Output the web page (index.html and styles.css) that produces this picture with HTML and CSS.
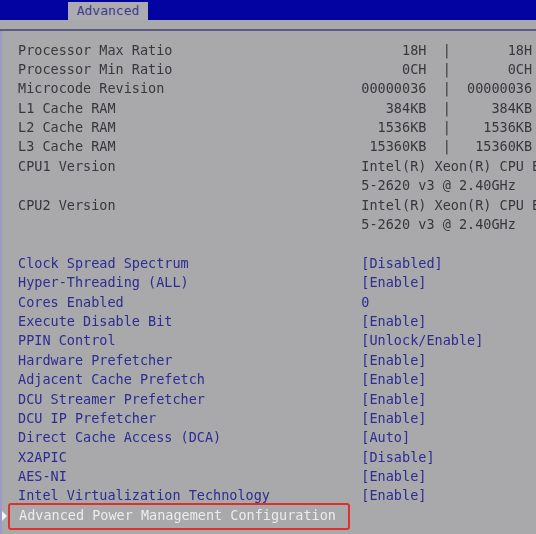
FILE: index.html
```html
<!DOCTYPE html>
<html>
<head>
  <title>Setup Utility - Advanced</title>
  <link rel="stylesheet" href="styles.css">
</head>
<body>
  <div class="topbar">
    <div class="tab">Advanced</div>
  </div>
  <div class="rule"></div>

  <div class="screen">
    <div class="row info"><span class="label">Processor Max Ratio</span><span class="value">     18H  |       18H</span></div>
    <div class="row info"><span class="label">Processor Min Ratio</span><span class="value">     0CH  |       0CH</span></div>
    <div class="row info"><span class="label">Microcode Revision</span><span class="value">00000036  |  00000036</span></div>
    <div class="row info"><span class="label">L1 Cache RAM</span><span class="value">   384KB  |     384KB</span></div>
    <div class="row info"><span class="label">L2 Cache RAM</span><span class="value">  1536KB  |    1536KB</span></div>
    <div class="row info"><span class="label">L3 Cache RAM</span><span class="value"> 15360KB  |   15360KB</span></div>
    <div class="row info"><span class="label">CPU1 Version</span><span class="value">Intel(R) Xeon(R) CPU E</span></div>
    <div class="row info"><span class="label"></span><span class="value">5-2620 v3 @ 2.40GHz</span></div>
    <div class="row info"><span class="label">CPU2 Version</span><span class="value">Intel(R) Xeon(R) CPU E</span></div>
    <div class="row info"><span class="label"></span><span class="value">5-2620 v3 @ 2.40GHz</span></div>
    <div class="row"></div>

    <div class="row opt"><span class="label">Clock Spread Spectrum</span><span class="value">[Disabled]</span></div>
    <div class="row opt"><span class="label">Hyper-Threading (ALL)</span><span class="value">[Enable]</span></div>
    <div class="row opt"><span class="label">Cores Enabled</span><span class="value">0</span></div>
    <div class="row opt"><span class="label">Execute Disable Bit</span><span class="value">[Enable]</span></div>
    <div class="row opt"><span class="label">PPIN Control</span><span class="value">[Unlock/Enable]</span></div>
    <div class="row opt"><span class="label">Hardware Prefetcher</span><span class="value">[Enable]</span></div>
    <div class="row opt"><span class="label">Adjacent Cache Prefetch</span><span class="value">[Enable]</span></div>
    <div class="row opt"><span class="label">DCU Streamer Prefetcher</span><span class="value">[Enable]</span></div>
    <div class="row opt"><span class="label">DCU IP Prefetcher</span><span class="value">[Enable]</span></div>
    <div class="row opt"><span class="label">Direct Cache Access (DCA)</span><span class="value">[Auto]</span></div>
    <div class="row opt"><span class="label">X2APIC</span><span class="value">[Disable]</span></div>
    <div class="row opt"><span class="label">AES-NI</span><span class="value">[Enable]</span></div>
    <div class="row opt"><span class="label">Intel Virtualization Technology</span><span class="value">[Enable]</span></div>
    <div class="row submenu selected"><span class="label">Advanced Power Management Configuration</span></div>
  </div>
</body>
</html>
```

FILE: styles.css
```css
html, body {
  margin: 0;
  height: 100%;
  overflow: hidden;
}
body {
  background: #a9a9ac;
  font-family: "DejaVu Sans Mono", "Liberation Mono", monospace;
  font-size: 13.5px;
}

/* blue title bar with the menu tab */
.topbar {
  background: #0303a2;
  height: 20px;
  display: flex;
  align-items: flex-end;
  padding-left: 68px;
}
.tab {
  background: #ababb0;
  color: #3c3c8c;
  width: 80px;
  height: 18px;
  line-height: 18px;
  text-align: center;
  font-size: 13px;
}
.rule {
  height: 2px;
  margin-top: 9px;
  background: #5a5a80;
}

.screen {
  border-left: 2px solid #9b9bc6;
  padding: 9.5px 0 0 16px;
  height: 600px;
  filter: blur(0.4px);
}
.row {
  display: flex;
  height: 19.4px;
  line-height: 19.4px;
  white-space: pre;
  position: relative;
}
.label {
  width: calc(42ch + 2px);
  flex: none;
}
.value {
  flex: none;
}
.info {
  color: #38383c;
}
.opt {
  color: #2c2c92;
}

/* highlighted submenu entry */
.selected {
  color: #ececec;
}
.selected .label {
  width: auto;
  padding-left: 1px;
}
.selected::before {
  content: "";
  position: absolute;
  left: -16px;
  top: 5px;
  border-left: 5px solid #f4f4f4;
  border-top: 5px solid transparent;
  border-bottom: 5px solid transparent;
}
.selected::after {
  content: "";
  position: absolute;
  left: -10px;
  width: 338px;
  top: -3px;
  bottom: -5px;
  border: 2px solid #e0302c;
  border-radius: 3px;
}
```
